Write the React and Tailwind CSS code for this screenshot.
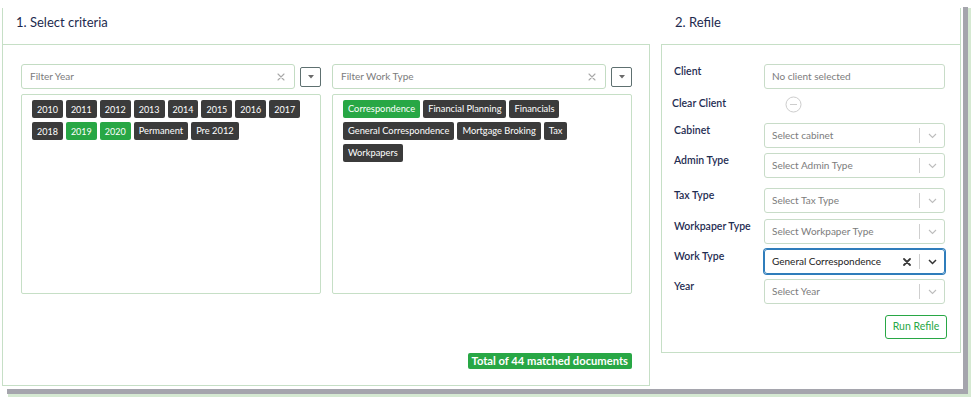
import React from "react";

const GREEN_BORDER = "border-[#c6dfc6]";

function Tag({ children, green, word }) {
  return (
    <span
      className={`inline-flex h-[18px] items-center rounded-[2px] px-[5px] leading-none text-white ${
        word ? "text-[9.3px]" : "text-[9px]"
      } ${green ? "bg-[#28a745]" : "bg-[#3b3b3b]"}`}
    >
      {children}
    </span>
  );
}

function XIcon({ dark }) {
  return dark ? (
    <svg width="8" height="8" viewBox="0 0 8 8">
      <path d="M1 1L7 7M7 1L1 7" stroke="#3a3a3a" strokeWidth="1.8" strokeLinecap="round" />
    </svg>
  ) : (
    <svg width="8" height="8" viewBox="0 0 8 8">
      <path d="M1 1L7 7M7 1L1 7" stroke="#a8a8a8" strokeWidth="1.1" strokeLinecap="round" />
    </svg>
  );
}

function Chevron({ dark }) {
  return (
    <svg width="9" height="6" viewBox="0 0 9 6">
      <path
        d="M1 1L4.5 4.5L8 1"
        fill="none"
        stroke={dark ? "#333" : "#bdbdbd"}
        strokeWidth={dark ? "1.5" : "1.1"}
      />
    </svg>
  );
}

function FilterRow({ placeholder }) {
  return (
    <div className="flex items-center gap-[5px]">
      <div className="flex h-[25px] flex-1 items-center justify-between rounded-[3px] border border-[#c3dcc3] pl-[8px] pr-[9px]">
        <span className="text-[10px] text-[#7c7c7c]">{placeholder}</span>
        <XIcon />
      </div>
      <div className="flex h-[20px] w-[21px] items-center justify-center rounded-[2px] border border-[#5e7070]">
        <svg width="6" height="4" viewBox="0 0 6 4">
          <path d="M0 0H6L3 3.5Z" fill="#6a6a6a" />
        </svg>
      </div>
    </div>
  );
}

function Select({ text, active }) {
  return (
    <div
      className={`flex h-[25px] w-[181px] items-center rounded-[3px] border ${
        active ? "border-[#2f7dbb] shadow-[0_0_0_1px_#2f7dbb]" : "border-[#c8dcc8]"
      }`}
    >
      <span className={`flex-1 pl-[7px] text-[10px] ${active ? "text-[#222]" : "text-[#7c7c7c]"}`}>
        {text}
      </span>
      {active && (
        <span className="mr-[4px] flex w-[16px] justify-center">
          <XIcon dark />
        </span>
      )}
      <span className="h-[15px] w-px bg-[#cfcfcf]" />
      <span className="flex w-[24px] justify-center">
        <Chevron dark={active} />
      </span>
    </div>
  );
}

function Label({ children, className = "" }) {
  return (
    <div className={`w-[90px] shrink-0 pt-[1px] text-[10.5px] font-semibold leading-[1.2] text-[#1f2d52] ${className}`}>
      {children}
    </div>
  );
}

export default function App() {
  const years = [
    ["2010"], ["2011"], ["2012"], ["2013"], ["2014"], ["2015"], ["2016"], ["2017"],
    ["2018"], ["2019", true], ["2020", true], ["Permanent"], ["Pre 2012"],
  ];
  const types = [
    ["Correspondence", true], ["Financial Planning"], ["Financials"],
    ["General Correspondence"], ["Mortgage Broking"], ["Tax"], ["Workpapers"],
  ];

  return (
    <div className="h-[397px] w-[974px] bg-white font-['Lato',sans-serif]">
      <div className="flex h-[389px] w-[963px] items-start bg-white shadow-[6px_6px_0_-1px_#a5a5ad,8px_8px_0_0_#d5e9d2]">
        {/* Left panel */}
        <div className={`ml-[2px] mt-[8px] flex h-[378px] w-[648px] flex-col border-b border-l ${GREEN_BORDER}`}>
          <div className={`h-[37px] border-b ${GREEN_BORDER} pl-[13px] pt-[6px] text-[13px] leading-[16px] text-[#1d2a4e]`}>
            1. Select criteria
          </div>
          <div className={`flex flex-1 flex-col border-r ${GREEN_BORDER} pl-[18px] pt-[19px]`}>
            <div className="flex w-[611px] flex-col">
              <div className="grid grid-cols-2 gap-[11px]">
                <div className="flex flex-col">
                  <FilterRow placeholder="Filter Year" />
                  <div className={`mt-[5px] flex h-[200px] flex-wrap content-start gap-x-[3px] gap-y-[4px] rounded-[2px] border ${GREEN_BORDER} px-[10px] pt-[5px]`}>
                    {years.map(([t, g]) => (
                      <Tag key={t} green={g} word={t.length > 4}>{t}</Tag>
                    ))}
                  </div>
                </div>
                <div className="flex flex-col">
                  <FilterRow placeholder="Filter Work Type" />
                  <div className={`mt-[5px] flex h-[200px] flex-wrap content-start gap-x-[3px] gap-y-[4px] rounded-[2px] border ${GREEN_BORDER} px-[10px] pt-[5px]`}>
                    {types.map(([t, g]) => (
                      <Tag key={t} green={g} word>{t}</Tag>
                    ))}
                  </div>
                </div>
              </div>
              <div className="mt-[59px] flex justify-end">
                <span className="inline-flex h-[16px] items-center rounded-[2px] bg-[#28a745] px-[4px] text-[11.2px] font-bold leading-none text-white">
                  Total of 44 matched documents
                </span>
              </div>
            </div>
          </div>
        </div>

        {/* Right panel */}
        <div className={`mt-[8px] flex h-[345px] w-[311px] flex-col border-r ${GREEN_BORDER}`}>
          <div className="h-[36px] pl-[25px] pt-[6px] text-[13px] leading-[16px] text-[#1d2a4e]">2. Refile</div>
          <div className={`ml-[11px] flex flex-1 flex-col border-b border-l border-t ${GREEN_BORDER} pl-[12px] pr-[15px] pt-[19px]`}>
            <div className="flex">
              <Label>Client</Label>
              <div className="flex h-[25px] w-[181px] items-center rounded-[3px] border border-[#c8dcc8] pl-[7px] text-[10px] text-[#7c7c7c]">
                No client selected
              </div>
            </div>
            <div className="mt-[6px] flex h-[18px] items-center">
              <div className="-ml-[2px] w-[92px] shrink-0 text-[10.5px] font-semibold text-[#1f2d52]">Clear Client</div>
              <div className="ml-[21px]">
                <svg width="17" height="17" viewBox="0 0 17 17">
                  <circle cx="8.5" cy="8.5" r="7.5" fill="none" stroke="#cdcdcd" strokeWidth="1" />
                  <path d="M5 8.5H12" stroke="#cdcdcd" strokeWidth="1" />
                </svg>
              </div>
            </div>
            <div className="mt-[10px] flex">
              <Label>Cabinet</Label>
              <Select text="Select cabinet" />
            </div>
            <div className="mt-[5px] flex">
              <Label>Admin Type</Label>
              <Select text="Select Admin Type" />
            </div>
            <div className="mt-[10px] flex">
              <Label>Tax Type</Label>
              <Select text="Select Tax Type" />
            </div>
            <div className="mt-[6px] flex">
              <Label>Workpaper Type</Label>
              <Select text="Select Workpaper Type" />
            </div>
            <div className="mt-[5px] flex">
              <Label>Work Type</Label>
              <Select text="General Correspondence" active />
            </div>
            <div className="mt-[5px] flex">
              <Label>Year</Label>
              <Select text="Select Year" />
            </div>
            <div className="-mr-[2px] mt-[11px] flex justify-end">
              <button className="h-[24px] w-[62px] rounded-[3px] border border-[#28a745] text-[10.5px] text-[#28a745]">
                Run Refile
              </button>
            </div>
          </div>
        </div>
      </div>
    </div>
  );
}
